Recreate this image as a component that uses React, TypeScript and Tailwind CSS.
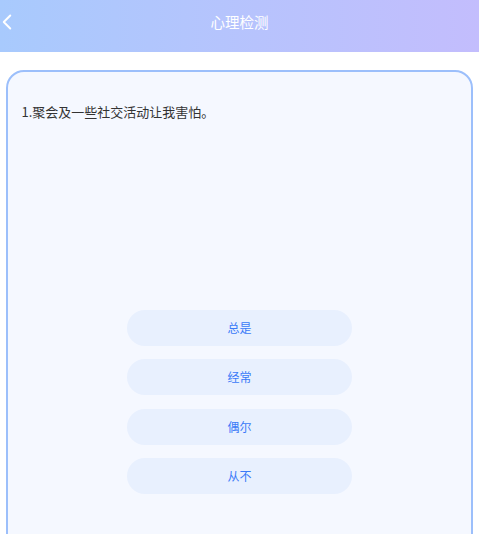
import { ChevronLeft } from 'lucide-react';

const options = ['总是', '经常', '偶尔', '从不'];

export default function App() {
  return (
    <div
      className="w-[479px] h-[534px] overflow-hidden bg-white"
      style={{ fontFamily: '"Noto Sans CJK SC", "Noto Sans", sans-serif' }}
    >
      {/* Header */}
      <div className="relative h-[52px] bg-gradient-to-r from-[#a8cafd] to-[#c3bdfd] flex items-center justify-center">
        <ChevronLeft className="absolute left-[-6px] top-[9px] w-[26px] h-[26px] text-white" strokeWidth={1.8} />
        <h1 className="text-[14.5px] text-white -mt-[8px]">心理检测</h1>
      </div>

      {/* Question card */}
      <div className="mx-[6px] mt-[18px] h-[500px] rounded-[18px] border-2 border-[#9cbffb] bg-[#f5f8ff] px-[13.5px] pt-[29.5px]">
        <p className="text-[13px] text-[#333333] leading-[20px]">1.聚会及一些社交活动让我害怕。</p>

        <div className="mt-[188px] flex flex-col items-center gap-[13.5px]">
          {options.map((opt) => (
            <button
              key={opt}
              className="w-[225px] h-[36px] rounded-full bg-[#e8f0fe] text-[12px] text-[#3a7af8] flex items-center justify-center"
            >
              {opt}
            </button>
          ))}
        </div>
      </div>
    </div>
  );
}
